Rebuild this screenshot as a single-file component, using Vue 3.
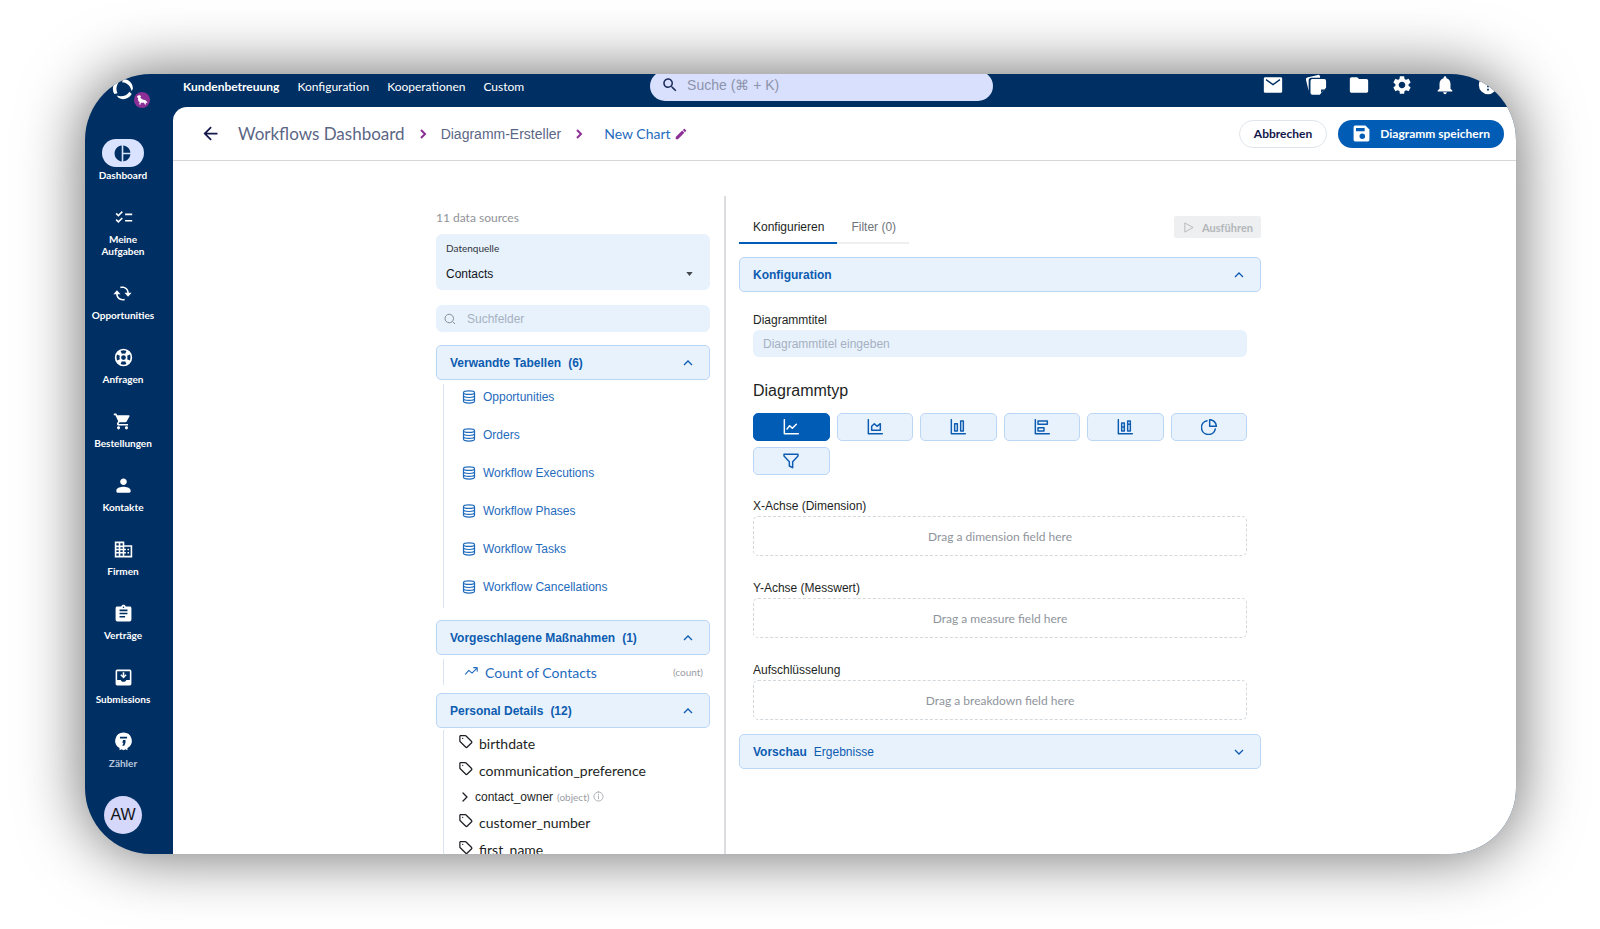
<template>
  <div class="stage">
    <div class="window">
      <aside class="sidebar">
        <div class="logo">
          <svg class="logo-mark" viewBox="0 0 24 24" fill="currentColor">
            <path d="M12 1C18 1 23 5.500 22.800 11.500L21.500 14.500C20.500 9 16.500 4.800 11 4.500z" />
            <path d="M12 1C18 1 23 5.500 22.800 11.500L21.500 14.500C20.500 9 16.500 4.800 11 4.500z" transform="rotate(120 12 12)" />
            <path d="M12 1C18 1 23 5.500 22.800 11.500L21.500 14.500C20.500 9 16.500 4.800 11 4.500z" transform="rotate(240 12 12)" />
          </svg>
          <svg class="logo-badge" viewBox="0 0 16 16">
            <circle cx="8" cy="8" r="8" fill="#8c2f96" />
            <path d="M3 5C3.500 3 5.800 2.500 7 4L6.400 5.800c1 .9 1.800 1.600 3.200 2 2 .3 3.300 1.200 4 3.400l-2-.6.4 1.900h-1.200l-.8-1.700H6.800l-.2 1.700H5.200l.4-2.200C4.400 9.300 3.600 7.900 4.200 6.200z" fill="#fff" />
          </svg>
        </div>
        <nav class="side-nav">
          <a v-for="item in sideItems" :key="item.label" href="#" class="side-item" :class="{ active: item.active, dim: item.dim }">
            <span class="side-icon">
              <svg viewBox="0 0 24 24" fill="currentColor" fill-rule="evenodd"><path :d="item.icon" /></svg>
            </span>
            <span class="side-label">{{ item.label }}</span>
          </a>
        </nav>
        <button class="avatar" type="button">AW</button>
      </aside>

      <div class="main">
        <header class="topbar">
          <nav class="top-nav">
            <a v-for="(link, index) in topLinks" :key="link" href="#" :class="{ current: index === 0 }">{{ link }}</a>
          </nav>
          <label class="search">
            <svg viewBox="0 0 24 24" fill="currentColor"><path :d="icons.search" /></svg>
            <input type="search" placeholder="Suche (⌘ + K)" aria-label="Suche" />
          </label>
          <div class="top-actions">
            <button v-for="action in topActions" :key="action.name" type="button" :aria-label="action.name">
              <svg viewBox="0 0 24 24" fill="currentColor" fill-rule="evenodd"><path :d="action.icon" /></svg>
            </button>
          </div>
        </header>

        <div class="sheet">
          <div class="page-header">
            <button class="back" type="button" aria-label="Zurück">
              <svg viewBox="0 0 24 24" fill="currentColor"><path d="M20 11H7.830l5.590-5.590L12 4l-8 8 8 8 1.410-1.410L7.830 13H20v-2z" /></svg>
            </button>
            <div class="breadcrumb">
              <a href="#" class="crumb-root">Workflows Dashboard</a>
              <svg class="crumb-sep" viewBox="0 0 12 12"><path d="M4 2l4 4-4 4" /></svg>
              <a href="#" class="crumb-parent">Diagramm-Ersteller</a>
              <svg class="crumb-sep" viewBox="0 0 12 12"><path d="M4 2l4 4-4 4" /></svg>
              <span class="crumb-current">New Chart</span>
              <button class="edit" type="button" aria-label="Umbenennen">
                <svg viewBox="0 0 24 24" fill="currentColor"><path :d="icons.edit" /></svg>
              </button>
            </div>
            <div class="header-actions">
              <button class="btn-cancel" type="button">Abbrechen</button>
              <button class="btn-save" type="button">
                <svg viewBox="0 0 24 24" fill="currentColor" fill-rule="evenodd"><path :d="icons.save" /></svg>
                Diagramm speichern
              </button>
            </div>
          </div>

          <div class="builder">
            <section class="fields-panel">
              <p class="source-count">11 data sources</p>
              <div class="source-box">
                <label for="source">Datenquelle</label>
                <div class="select-wrap">
                  <select id="source" v-model="source">
                    <option>Contacts</option>
                  </select>
                  <svg viewBox="0 0 8 5" fill="currentColor"><path d="M0 0h8L4 5z" /></svg>
                </div>
              </div>
              <label class="field-search">
                <svg viewBox="0 0 24 24"><path d="M10.500 2.500a8.500 8.500 0 1 0 0 17 8.500 8.500 0 1 0 0-17zM17 17l5 5" /></svg>
                <input type="text" placeholder="Suchfelder" aria-label="Suchfelder" />
              </label>

              <button class="group-head" type="button" @click="open.tables = !open.tables">
                <span class="group-title">Verwandte Tabellen</span>
                <span class="group-count">(6)</span>
                <svg class="chevron" :class="{ closed: !open.tables }" viewBox="0 0 12 12"><path d="M2 8l4-4 4 4" /></svg>
              </button>
              <ul v-if="open.tables" class="tree tables">
                <li v-for="table in tables" :key="table">
                  <svg viewBox="0 0 24 24"><path :d="icons.database" /></svg>
                  <a href="#">{{ table }}</a>
                </li>
              </ul>

              <button class="group-head" type="button" @click="open.measures = !open.measures">
                <span class="group-title">Vorgeschlagene Maßnahmen</span>
                <span class="group-count">(1)</span>
                <svg class="chevron" :class="{ closed: !open.measures }" viewBox="0 0 12 12"><path d="M2 8l4-4 4 4" /></svg>
              </button>
              <ul v-if="open.measures" class="tree measures">
                <li>
                  <svg viewBox="0 0 24 24"><path d="M1 15l6-7 6 5 9-9M16 3h6.500v6.500" /></svg>
                  <a href="#">Count of Contacts</a>
                  <span class="hint">(count)</span>
                </li>
              </ul>

              <button class="group-head" type="button" @click="open.details = !open.details">
                <span class="group-title">Personal Details</span>
                <span class="group-count">(12)</span>
                <svg class="chevron" :class="{ closed: !open.details }" viewBox="0 0 12 12"><path d="M2 8l4-4 4 4" /></svg>
              </button>
              <ul v-if="open.details" class="tree details">
                <li v-for="field in fields" :key="field.name" :class="{ object: field.object }">
                  <template v-if="field.object">
                    <svg class="expand" viewBox="0 0 12 12"><path d="M4 2l4 4-4 4" /></svg>
                    <span>{{ field.name }}</span>
                    <span class="hint">(object)</span>
                    <svg class="info" viewBox="0 0 24 24"><path d="M12 2a10 10 0 1 0 0 20 10 10 0 1 0 0-20zM12 11v6M12 7v1" /></svg>
                  </template>
                  <template v-else>
                    <svg class="tag" viewBox="0 0 24 24"><path :d="icons.tag" /></svg>
                    <span>{{ field.name }}</span>
                  </template>
                </li>
              </ul>
            </section>

            <section class="config-panel">
              <div class="tab-row">
                <div class="tabs">
                  <button type="button" :class="{ selected: tab === 'config' }" @click="tab = 'config'">Konfigurieren</button>
                  <button type="button" :class="{ selected: tab === 'filter' }" @click="tab = 'filter'">Filter (0)</button>
                </div>
                <button class="btn-run" type="button" disabled>
                  <svg viewBox="0 0 12 12"><path d="M2 1l9 5-9 5z" /></svg>
                  Ausführen
                </button>
              </div>

              <button class="group-head" type="button" @click="open.config = !open.config">
                <span class="group-title">Konfiguration</span>
                <svg class="chevron" :class="{ closed: !open.config }" viewBox="0 0 12 12"><path d="M2 8l4-4 4 4" /></svg>
              </button>
              <div v-if="open.config" class="config-body">
                <label class="field-label" for="chart-title">Diagrammtitel</label>
                <input id="chart-title" v-model="chartTitle" class="title-input" type="text" placeholder="Diagrammtitel eingeben" />

                <h3>Diagrammtyp</h3>
                <div class="chart-types">
                  <button
                    v-for="type in chartTypes"
                    :key="type.name"
                    type="button"
                    :aria-label="type.name"
                    :class="{ selected: chartType === type.name }"
                    @click="chartType = type.name"
                  >
                    <svg viewBox="0 0 24 24"><path :d="type.icon" /></svg>
                  </button>
                </div>

                <div v-for="zone in zones" :key="zone.label" class="zone">
                  <span class="field-label">{{ zone.label }}</span>
                  <div class="drop">{{ zone.text }}</div>
                </div>
              </div>

              <button class="group-head" type="button" @click="open.preview = !open.preview">
                <span class="group-title">Vorschau</span>
                <span class="group-sub">Ergebnisse</span>
                <svg class="chevron" :class="{ closed: !open.preview }" viewBox="0 0 12 12"><path d="M2 8l4-4 4 4" /></svg>
              </button>
            </section>
          </div>
        </div>
      </div>
    </div>
  </div>
</template>

<script setup>
import { reactive, ref } from 'vue';

const source = ref('Contacts');
const tab = ref('config');
const chartTitle = ref('');
const chartType = ref('line');
const open = reactive({ tables: true, measures: true, details: true, config: true, preview: false });

const icons = {
  search:
    'M15.5 14h-.79l-.28-.27C15.41 12.59 16 11.11 16 9.5 16 5.91 13.09 3 9.5 3S3 5.91 3 9.5 5.91 16 9.5 16c1.61 0 3.09-.59 4.23-1.57l.27.28v.79l5 4.99L20.49 19l-4.99-5zm-6 0C7.01 14 5 11.99 5 9.5S7.01 5 9.5 5 14 7.01 14 9.5 11.99 14 9.5 14z',
  edit: 'M3 17.25V21h3.75L17.81 9.94l-3.75-3.75L3 17.25zM20.71 7.04c.39-.39.39-1.02 0-1.41l-2.34-2.34c-.39-.39-1.02-.39-1.41 0l-1.83 1.83 3.75 3.75 1.83-1.83z',
  save: 'M4 2h13l5 5v13a2 2 0 0 1-2 2H4a2 2 0 0 1-2-2V4a2 2 0 0 1 2-2zM5 5v4h11V5zM13 12a3.500 3.500 0 1 0 0 7 3.500 3.500 0 1 0 0-7z',
  database:
    'M12 1.500c6 0 9.500 1.200 9.500 3S18 7.500 12 7.500 2.500 6.300 2.500 4.500 6 1.500 12 1.500zM2.500 4.500V19c0 2.300 3.500 3.500 9.500 3.500s9.500-1.200 9.500-3.500V4.500M2.500 9.500c0 2 3.500 3.300 9.500 3.300s9.500-1.300 9.500-3.300M2.500 14.500c0 2 3.500 3.300 9.500 3.300s9.500-1.300 9.500-3.300',
  tag: 'M4 2.500h7.500c.6 0 1 .2 1.400.6l8.500 8.500c.8.800.8 2 0 2.800l-6.500 6.500c-.8.800-2 .8-2.800 0L3.600 12.400c-.4-.4-.6-.8-.6-1.400V3.500zM7.500 7v.1',
};

const sideItems = [
  {
    label: 'Dashboard',
    active: true,
    icon: 'M11 2v20c-5.07-.5-9-4.79-9-10s3.93-9.5 9-10zm2.03 0v8.99H22c-.47-4.74-4.24-8.52-8.97-8.99zm0 11.01V22c4.74-.47 8.5-4.25 8.97-8.99h-8.97z',
  },
  {
    label: 'Meine Aufgaben',
    icon: 'M23 7h-9v2h9V7zm0 8h-9v2h9v-2zM5.54 11L2 7.46l1.41-1.41 2.12 2.12 4.24-4.24 1.41 1.41L5.54 11zm0 8L2 15.46l1.41-1.41 2.12 2.12 4.24-4.24 1.41 1.41L5.54 19z',
  },
  {
    label: 'Opportunities',
    icon: 'M9 3.5C14.500 2 20 5.500 20 11h3.500L19 16l-4.500-5H18c0-4-4-6.800-8.400-5.500zM15 20.500C9.500 22 4 18.500 4 13H.5L5 8l4.500 5H6c0 4 4 6.800 8.400 5.500z',
  },
  {
    label: 'Anfragen',
    icon: 'M12 1a11 11 0 1 0 0 22 11 11 0 1 0 0-22zM12 9a3 3 0 1 1 0 6 3 3 0 1 1 0-6zM8.300 3.800a9 9 0 0 1 7.400 0L14.100 7.400a5 5 0 0 0-4.200 0zM8.300 20.200a9 9 0 0 0 7.400 0L14.100 16.600a5 5 0 0 1-4.200 0zM3.800 8.300a9 9 0 0 0 0 7.400L7.400 14.100a5 5 0 0 1 0-4.200zM20.200 8.300a9 9 0 0 1 0 7.400L16.600 14.100a5 5 0 0 0 0-4.200z',
  },
  {
    label: 'Bestellungen',
    icon: 'M7 18c-1.1 0-1.99.9-1.99 2S5.9 22 7 22s2-.9 2-2-.9-2-2-2zM1 2v2h2l3.6 7.59-1.35 2.45c-.16.28-.25.61-.25.96 0 1.1.9 2 2 2h12v-2H7.42c-.14 0-.25-.11-.25-.25l.03-.12.9-1.63h7.45c.75 0 1.41-.41 1.75-1.03l3.58-6.49c.08-.14.12-.31.12-.48 0-.55-.45-1-1-1H5.21l-.94-2H1zm16 16c-1.1 0-1.99.9-1.99 2s.89 2 1.99 2 2-.9 2-2-.9-2-2-2z',
  },
  {
    label: 'Kontakte',
    icon: 'M12 11.500c2.400 0 4.200-1.900 4.200-4.200S14.400 3 12 3 7.800 4.900 7.800 7.300s1.800 4.200 4.200 4.200zM12 13.500c-3 0-9 1.400-9 4.500v1.500c0 .8.7 1.500 1.500 1.500h15c.8 0 1.500-.7 1.500-1.500V18c0-3.100-6-4.500-9-4.500z',
  },
  {
    label: 'Firmen',
    icon: 'M13 6.500V2H1v20h22V6.500H13zM6 20H3v-3h3v3zm0-5H3v-2h3v2zm0-4H3V9h3v2zm0-4H3V4h3v3zm5 13H8v-3h3v3zm0-5H8v-2h3v2zm0-4H8V9h3v2zm0-4H8V4h3v3zm10 13h-8v-3h2v-2h-2v-2h2v-2h-2V8.500h8V20zm-2-9h-2v2h2v-2zm0 4h-2v2h2v-2z',
  },
  {
    label: 'Verträge',
    icon: 'M19 3h-4.180C14.4 1.84 13.3 1 12 1c-1.3 0-2.4.84-2.82 2H4c-1.1 0-2 .9-2 2v15c0 1.1.9 2 2 2h16c1.1 0 2-.9 2-2V5c0-1.1-.9-2-2-2zm-7 0c.55 0 1 .45 1 1s-.45 1-1 1-1-.45-1-1 .45-1 1-1zm2 14H7v-2h7v2zm3-4H7v-2h10v2zm0-4H7V7h10v2z',
  },
  {
    label: 'Submissions',
    icon: 'M4 2h16a2 2 0 0 1 2 2v16a2 2 0 0 1-2 2H4a2 2 0 0 1-2-2V4a2 2 0 0 1 2-2zM4 4v11h4.500c.8 1.800 2 2.500 3.500 2.500s2.700-.7 3.500-2.500H20V4zM11 5.500h2v4.200l1.700-1.700 1.300 1.300-4 4-4-4L9.300 8l1.700 1.700z',
  },
  {
    label: 'Zähler',
    dim: true,
    icon: 'M12 .5a10.500 10.500 0 0 1 5 19.700V23l-2.500-1.200L12 23l-2.500-1.200L7 23v-2.800a10.500 10.500 0 0 1 5-19.700zM7.500 6v2.200h9V6zM11.500 10l-1 3.500h1.500L10.500 17.500h2.500L15 12h-1l.8-2z',
  },
];

const topLinks = ['Kundenbetreuung', 'Konfiguration', 'Kooperationen', 'Custom'];

const topActions = [
  {
    name: 'Nachrichten',
    icon: 'M3.500 3.500h17a1.500 1.500 0 0 1 1.500 1.500v14a1.500 1.500 0 0 1-1.500 1.500h-17A1.500 1.500 0 0 1 2 19V5a1.500 1.500 0 0 1 1.500-1.500zM4.800 5.500L4 6.700l8 5.800L20 6.700l-.8-1.200L12 10.500z',
  },
  {
    name: 'Notizen',
    icon: 'M4 18.500L1 6a2 2 0 0 1 1.500-2.300L14 1a2 2 0 0 1 2.300 1.500L16.500 4H7a3 3 0 0 0-3 3zM8 5.500h13a2 2 0 0 1 2 2V15l-7 7.500H8a2 2 0 0 1-2-2v-13a2 2 0 0 1 2-2zM17.500 20.500V17h3.800z',
  },
  {
    name: 'Dateien',
    icon: 'M10 3.500H4c-1.1 0-2 .9-2 2v13c0 1.1.9 2 2 2h16c1.1 0 2-.9 2-2v-11c0-1.1-.9-2-2-2h-8l-2-2z',
  },
  {
    name: 'Einstellungen',
    icon: 'M19.14 12.94c.04-.3.06-.61.06-.94 0-.32-.02-.64-.07-.94l2.03-1.58c.18-.14.23-.41.12-.61l-1.92-3.32c-.12-.22-.37-.29-.59-.22l-2.39.96c-.5-.38-1.03-.7-1.62-.94l-.36-2.54c-.04-.24-.24-.41-.48-.41h-3.84c-.24 0-.43.17-.47.41l-.36 2.54c-.59.24-1.13.57-1.62.94l-2.39-.96c-.22-.08-.47 0-.59.22L2.74 8.87c-.12.21-.08.47.12.61l2.03 1.58c-.05.3-.09.63-.09.94s.02.64.07.94l-2.03 1.58c-.18.14-.23.41-.12.61l1.92 3.32c.12.22.37.29.59.22l2.39-.96c.5.38 1.03.7 1.62.94l.36 2.54c.05.24.24.41.48.41h3.84c.24 0 .44-.17.47-.41l.36-2.54c.59-.24 1.13-.56 1.62-.94l2.39.96c.22.08.47 0 .59-.22l1.92-3.32c.12-.22.07-.47-.12-.61l-2.01-1.58zM12 15.6c-1.98 0-3.6-1.62-3.6-3.6s1.62-3.6 3.6-3.6 3.6 1.62 3.6 3.6-1.62 3.6-3.6 3.6z',
  },
  {
    name: 'Benachrichtigungen',
    icon: 'M12 22c1.1 0 2-.9 2-2h-4c0 1.1.89 2 2 2zm6-6v-5c0-3.070-1.64-5.64-4.5-6.32V4c0-.83-.67-1.5-1.5-1.5s-1.5.67-1.5 1.5v.68C7.63 5.36 6 7.92 6 11v5l-2 2v1h16v-1l-2-2z',
  },
  {
    name: 'Hilfe',
    icon: 'M12 2a10 10 0 1 0 0 20 10 10 0 1 0 0-20zM11 16h2v2h-2zM11 14.500h2c0-2.500 3-2.800 3-5.500a4 4 0 0 0-8 0h2a2 2 0 0 1 4 0c0 2-3 2.200-3 5.500z',
  },
];

const tables = ['Opportunities', 'Orders', 'Workflow Executions', 'Workflow Phases', 'Workflow Tasks', 'Workflow Cancellations'];

const fields = [
  { name: 'birthdate' },
  { name: 'communication_preference' },
  { name: 'contact_owner', object: true },
  { name: 'customer_number' },
  { name: 'first_name' },
];

const chartTypes = [
  { name: 'line', icon: 'M2 1v21h21M6 15l4-5 4 4 6-6' },
  { name: 'area', icon: 'M2 1v21h21M7 17V11l4-4 4 4 5-4v10z' },
  { name: 'column', icon: 'M2 1v21h21M7 7h4v11H7zM16 3h4v15h-4z' },
  { name: 'bar', icon: 'M2 1v21h21M6 3h14v5H6zM6 13h9v5H6z' },
  { name: 'stacked', icon: 'M2 1v21h21M7 6h4v12H7zM7 12h4M16 3h4v15h-4zM16 8h4' },
  { name: 'pie', icon: 'M13 1v10h10A10 10 0 0 0 13 1zM9 2.500A10.500 10.500 0 1 0 21.500 15' },
  { name: 'funnel', icon: 'M1.500 2h21v2.500L14.500 13v9l-5-2.500V13L1.500 4.500z' },
];

const zones = [
  { label: 'X-Achse (Dimension)', text: 'Drag a dimension field here' },
  { label: 'Y-Achse (Messwert)', text: 'Drag a measure field here' },
  { label: 'Aufschlüsselung', text: 'Drag a breakdown field here' },
];
</script>

<style>
body {
  margin: 0;
  background: #ffffff;
}
</style>

<style scoped>
.stage {
  --brand: Lato, 'Open Sans', sans-serif;
  --plain: 'Liberation Sans', Arial, sans-serif;
  --navy: #002f63;
  --blue: #005cb5;
  height: 100vh;
  box-sizing: border-box;
  padding: 74px 84px 75px 85px;
  font-family: var(--plain);
  font-size: 12px;
  color: #1d1f24;
}

.stage *,
.stage *::before {
  box-sizing: border-box;
}

a {
  color: inherit;
  text-decoration: none;
}

button {
  font: inherit;
  color: inherit;
  background: none;
  border: none;
  padding: 0;
  cursor: pointer;
}

input,
select {
  font: inherit;
  color: inherit;
  background: none;
  border: none;
  outline: none;
  padding: 0;
  min-width: 0;
}

ul,
p,
h3 {
  margin: 0;
  padding: 0;
  list-style: none;
}

svg {
  display: block;
  flex: none;
}

.window {
  height: 100%;
  display: flex;
  background: var(--navy);
  border-radius: 66px;
  overflow: hidden;
  box-shadow: 0 0 64px rgba(0, 0, 0, 0.6);
}

.sidebar {
  width: 88px;
  flex: none;
  padding-right: 12px;
  display: flex;
  flex-direction: column;
  align-items: center;
  color: #ffffff;
}

.logo {
  position: relative;
  flex: none;
  width: 22px;
  height: 65px;
  padding-top: 4px;
}

.logo-mark {
  width: 22px;
  height: 22px;
}

.logo-badge {
  position: absolute;
  left: 22px;
  top: 18px;
  width: 16px;
  height: 16px;
}

.side-nav {
  display: flex;
  flex-direction: column;
  align-items: center;
  gap: 21px;
}

.side-item {
  display: flex;
  flex-direction: column;
  align-items: center;
  gap: 2px;
}

.side-icon {
  width: 42px;
  height: 28px;
  border-radius: 14px;
  display: flex;
  align-items: center;
  justify-content: center;
}

.side-icon svg {
  width: 19px;
  height: 19px;
}

.active .side-icon {
  background: #d9e2ff;
  color: var(--navy);
}

.side-label {
  max-width: 66px;
  font-family: var(--brand);
  font-size: 10px;
  font-weight: 700;
  line-height: 12px;
  padding-bottom: 1px;
  text-align: center;
}

.dim .side-label {
  color: #b9c6dc;
}

.avatar {
  width: 38px;
  height: 38px;
  flex: none;
  margin-top: 26px;
  border-radius: 50%;
  background: #d5d8fa;
  color: #111318;
  font-size: 16px;
}

.main {
  flex: 1;
  min-width: 0;
  display: flex;
  flex-direction: column;
}

.topbar {
  height: 33px;
  flex: none;
  display: flex;
  align-items: flex-end;
  padding: 0 17px 6px 10px;
  color: #ffffff;
}

.top-nav {
  flex: 12 1 0;
  display: flex;
  gap: 18px;
  font-family: var(--brand);
  font-size: 12px;
  line-height: 28px;
}

.top-nav .current {
  font-weight: 700;
}

.search {
  flex: 0 1 343px;
  height: 30px;
  border-radius: 15px;
  background: #d9e0fd;
  display: flex;
  align-items: center;
  gap: 8px;
  padding: 0 11px 2px;
  color: #1d2d5c;
}

.search svg {
  width: 18px;
  height: 18px;
}

.search input {
  flex: 1;
  font-size: 14px;
}

.search input::placeholder {
  color: #8c93ab;
}

.top-actions {
  flex: 13 1 0;
  display: flex;
  justify-content: flex-end;
  gap: 21px;
}

.top-actions svg {
  width: 22px;
  height: 22px;
}

.top-actions button {
  padding: 3px 0 5px;
}

.sheet {
  flex: 1;
  min-height: 0;
  display: flex;
  flex-direction: column;
  background: #ffffff;
  border-top-left-radius: 14px;
}

.page-header {
  height: 54px;
  flex: none;
  display: flex;
  align-items: center;
  padding: 0 12px 0 27px;
  border-bottom: 1px solid #d6d7d9;
  font-family: var(--brand);
}

.back {
  margin-right: 17px;
  color: #14174a;
}

.back svg {
  width: 21px;
  height: 21px;
}

.breadcrumb {
  display: flex;
  align-items: center;
  color: #5b6685;
}

.crumb-root {
  font-size: 17px;
}

.crumb-sep {
  width: 12px;
  height: 12px;
  margin: 0 12px;
  fill: none;
  stroke: #8c2f96;
  stroke-width: 2;
}

.crumb-parent {
  font-family: var(--plain);
  font-size: 14px;
}

.crumb-current {
  margin-left: 7px;
  font-size: 14px;
  color: #1f6bbd;
}

.edit {
  margin-left: 3px;
  color: #8c2f96;
}

.edit svg {
  width: 14px;
  height: 14px;
}

.header-actions {
  margin-left: auto;
  display: flex;
  gap: 11px;
  font-weight: 700;
}

.btn-cancel,
.btn-save {
  height: 28px;
  border-radius: 14px;
  padding: 0 14px;
  white-space: nowrap;
}

.btn-cancel {
  border: 1px solid #dfe5ea;
  color: #14174a;
}

.btn-save {
  display: flex;
  align-items: center;
  gap: 9px;
  background: var(--blue);
  color: #ffffff;
}

.btn-save svg {
  width: 19px;
  height: 19px;
}

.builder {
  flex: 1;
  min-height: 0;
  width: 100%;
  max-width: 833px;
  margin: 0 auto;
  padding: 35px 0 0 8px;
  display: grid;
  grid-template-columns: minmax(0, 288fr) minmax(0, 537fr);
  grid-template-rows: minmax(0, 1fr);
}

.fields-panel {
  overflow: hidden;
  padding: 13px 14px 0 0;
}

.config-panel {
  padding: 17px 0 0 13px;
  border-left: 2px solid #dcdde0;
}

.source-count {
  font-family: var(--brand);
  line-height: 18px;
  color: #8f9298;
}

.source-box {
  margin-top: 7px;
  padding: 6px 10px 5px;
  border-radius: 6px;
  background: #e8f2fd;
}

.source-box label {
  display: block;
  font-family: var(--brand);
  font-size: 10px;
  line-height: 16px;
  color: #30343c;
}

.select-wrap {
  display: flex;
  align-items: center;
  margin-top: 7px;
  padding-right: 7px;
}

.select-wrap select {
  flex: 1;
  height: 22px;
  appearance: none;
  color: #111318;
}

.select-wrap svg {
  width: 7px;
  height: 4px;
  color: #44484f;
}

.field-search {
  height: 27px;
  margin: 15px 0 13px;
  padding: 0 8px;
  display: flex;
  align-items: center;
  gap: 11px;
  border-radius: 6px;
  background: #e8f2fd;
}

.field-search svg {
  width: 12px;
  height: 12px;
  fill: none;
  stroke: #858d99;
  stroke-width: 2;
}

.field-search input {
  flex: 1;
}

input::placeholder {
  color: #a5b0c0;
  opacity: 1;
}

.group-head {
  width: 100%;
  height: 35px;
  display: flex;
  align-items: center;
  gap: 7px;
  padding: 0 15px 0 13px;
  border: 1px solid #bcd6f5;
  border-radius: 5px;
  background: #e8f2fd;
  color: #0d5cb0;
}

.group-title,
.group-count {
  font-weight: 700;
}

.chevron {
  width: 12px;
  height: 12px;
  margin-left: auto;
  fill: none;
  stroke: currentColor;
  stroke-width: 1.3;
}

.chevron.closed {
  transform: rotate(180deg);
}

.tree {
  margin: 4px 0 0 7px;
  border-left: 1px solid #d9e4f5;
}

.tree li {
  display: flex;
  align-items: center;
}

.tree svg {
  fill: none;
  stroke: currentColor;
  stroke-width: 2;
  stroke-linecap: round;
  stroke-linejoin: round;
}

.tables {
  margin-bottom: 12px;
  padding-bottom: 8px;
  display: flex;
  flex-direction: column;
  gap: 12px;
  color: #1f6bbd;
}

.tables li {
  height: 26px;
  padding-left: 18px;
  gap: 7px;
}

.tables svg {
  width: 14px;
  height: 14px;
}

.measures {
  margin-bottom: 8px;
  color: #1f6bbd;
}

.measures li {
  height: 26px;
  gap: 7px;
  padding: 0 7px 0 21px;
  font-family: var(--brand);
  font-size: 14px;
}

.measures svg {
  width: 13px;
  height: 13px;
}

.hint {
  font-family: var(--brand);
  font-size: 10px;
  color: #9a9da3;
}

.measures .hint {
  margin-left: auto;
}

.details {
  margin-top: 2px;
}

.details li {
  height: 27px;
  padding-left: 14px;
  gap: 6px;
  font-family: var(--brand);
  font-size: 14px;
}

.details li.object {
  height: 25px;
  gap: 4px;
  padding-left: 15px;
  font-family: var(--plain);
  font-size: 12px;
}

.details .tag {
  width: 15px;
  height: 15px;
  margin-bottom: 4px;
}

.details .expand {
  width: 12px;
  height: 12px;
  stroke-width: 1.3;
}

.details .info {
  width: 11px;
  height: 11px;
  color: #a9acb1;
}

.tab-row {
  display: flex;
  align-items: flex-start;
  justify-content: space-between;
}

.tabs {
  display: flex;
}

.tabs button {
  height: 31px;
  padding: 0 13px 2px 14px;
  border-bottom: 2px solid #eeeff1;
  color: #6f737b;
}

.tabs .selected {
  border-bottom-color: var(--blue);
  color: #1d1f24;
}

.btn-run {
  height: 22px;
  margin-top: 3px;
  padding: 0 8px 0 9px;
  display: flex;
  align-items: center;
  gap: 8px;
  border-radius: 2px;
  background: #edeff0;
  color: #b3b6ba;
  font-family: var(--brand);
  font-size: 11px;
  font-weight: 700;
}

.btn-run svg {
  width: 11px;
  height: 11px;
  fill: none;
  stroke: currentColor;
  stroke-width: 1;
}

.tab-row + .group-head {
  margin-top: 13px;
}

.config-body {
  padding: 20px 14px 14px;
}

.field-label {
  display: block;
  line-height: 16px;
}

.title-input {
  display: block;
  width: 100%;
  height: 27px;
  margin-top: 2px;
  padding: 0 10px;
  border-radius: 6px;
  background: #e8f2fd;
}

h3 {
  margin: 24px 0 12px;
  font-size: 16px;
  font-weight: 400;
  line-height: 20px;
}

.chart-types {
  display: grid;
  grid-template-columns: repeat(6, 1fr);
  gap: 6px 7px;
  margin-bottom: 23px;
}

.chart-types button {
  height: 28px;
  display: flex;
  align-items: center;
  justify-content: center;
  border: 1px solid #bcd6f5;
  border-radius: 5px;
  background: #e8f2fd;
  color: #0d5cb0;
}

.chart-types .selected {
  border-color: var(--blue);
  background: var(--blue);
  color: #ffffff;
}

.chart-types svg {
  width: 16px;
  height: 16px;
  fill: none;
  stroke: currentColor;
  stroke-width: 2.2;
  stroke-linejoin: round;
  stroke-linecap: round;
}

.zone + .zone {
  margin-top: 24px;
}

.drop {
  height: 40px;
  margin-top: 2px;
  display: flex;
  align-items: center;
  justify-content: center;
  border: 1px dashed #d3d8dc;
  border-radius: 5px;
  font-family: var(--brand);
  color: #8f949c;
}
</style>
